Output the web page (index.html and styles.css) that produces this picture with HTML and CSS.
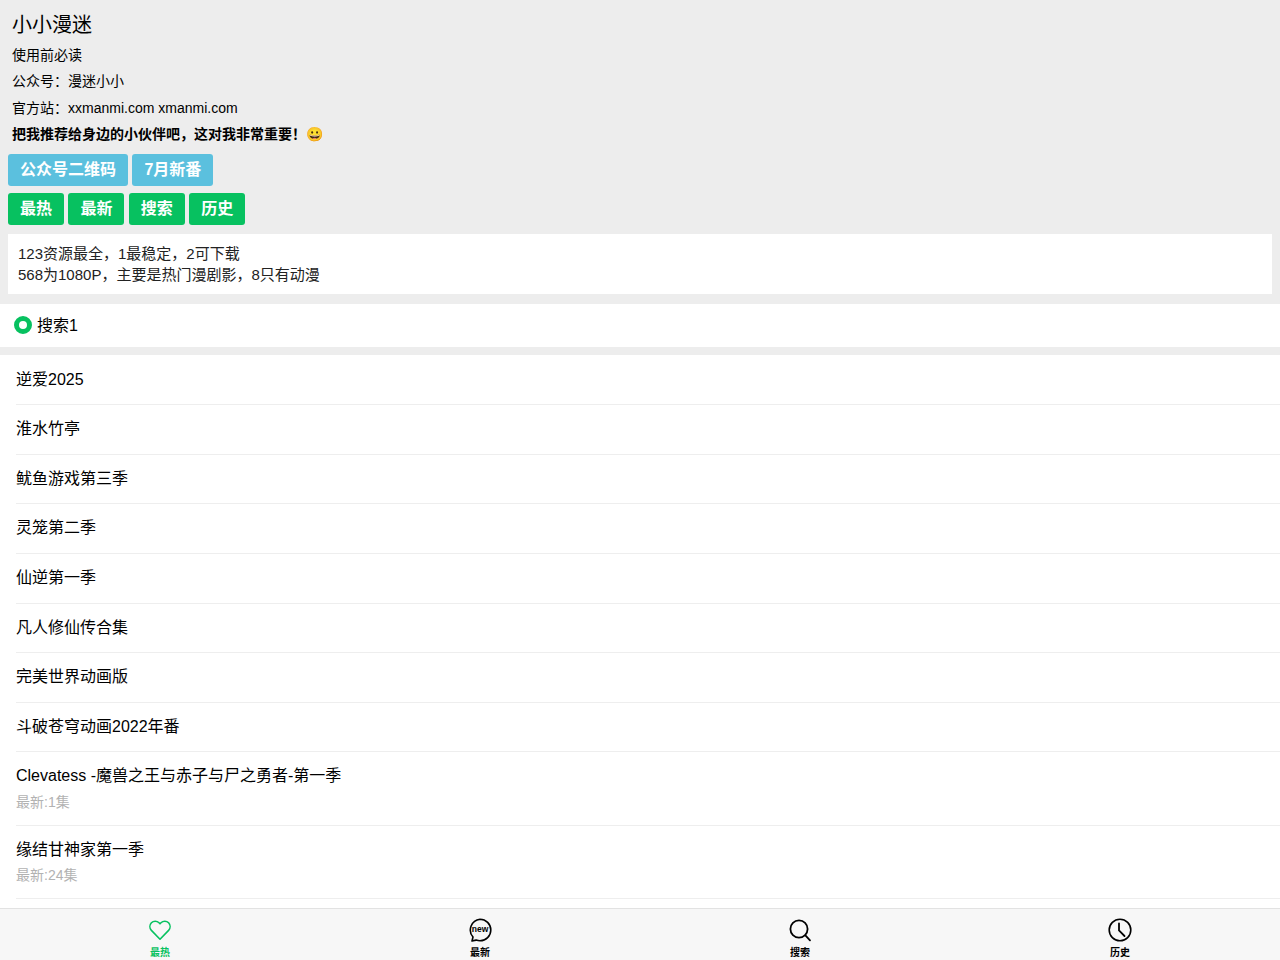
FILE: index.html
```html
<!DOCTYPE html>
<html lang="zh-CN">
<head>
    <meta charset="UTF-8">
    <meta name="viewport" content="width=device-width, initial-scale=1.0">
    <title>小小漫迷</title>
    <link rel="stylesheet" href="styles.css">
</head>
<body>
    <header class="intro">
        <h1 class="intro-title">小小漫迷</h1>
        <p class="intro-line">使用前必读</p>
        <p class="intro-line">公众号：漫迷小小</p>
        <p class="intro-line">官方站：xxmanmi.com xmanmi.com</p>
        <p class="intro-line intro-strong">把我推荐给身边的小伙伴吧，这对我非常重要！😀</p>
        <div class="btn-row">
            <a class="btn btn-info">公众号二维码</a>
            <a class="btn btn-info">7月新番</a>
        </div>
        <div class="btn-row">
            <a class="btn btn-green">最热</a>
            <a class="btn btn-green">最新</a>
            <a class="btn btn-green">搜索</a>
            <a class="btn btn-green">历史</a>
        </div>
        <div class="notice">
            123资源最全，1最稳定，2可下载<br>
            568为1080P，主要是热门漫剧影，8只有动漫
        </div>
    </header>

    <div class="source">
        <span class="radio"></span>
        <span class="source-name">搜索1</span>
    </div>

    <ul class="list">
        <li class="list-item">逆爱2025</li>
        <li class="list-item">淮水竹亭</li>
        <li class="list-item">鱿鱼游戏第三季</li>
        <li class="list-item">灵笼第二季</li>
        <li class="list-item">仙逆第一季</li>
        <li class="list-item">凡人修仙传合集</li>
        <li class="list-item">完美世界动画版</li>
        <li class="list-item">斗破苍穹动画2022年番</li>
        <li class="list-item">Clevatess -魔兽之王与赤子与尸之勇者-第一季<div class="list-sub">最新:1集</div></li>
        <li class="list-item">缘结甘神家第一季<div class="list-sub">最新:24集</div></li>
    </ul>

    <nav class="tabbar">
        <a class="tab tab-active">
            <svg class="tab-icon" viewBox="0 0 24 24" fill="none" stroke="currentColor" stroke-width="1.6" stroke-linejoin="round">
                <path d="M12 21.2 3.4 12.4a5.6 5.6 0 0 1 0-7.6 5.3 5.3 0 0 1 7.6 0l1 1 1-1a5.3 5.3 0 0 1 7.6 0 5.6 5.6 0 0 1 0 7.6z"/>
            </svg>
            <span class="tab-label">最热</span>
        </a>
        <a class="tab">
            <svg class="tab-icon" viewBox="0 0 24 24" fill="none" stroke="currentColor" stroke-width="1.6" stroke-linejoin="round">
                <path d="M12 1.2a10.8 10.8 0 0 1 0 21.6c-1.4 0-2.7-.3-3.9-.7L4 23l1-4A10.8 10.8 0 0 1 12 1.2z"/>
                <text class="new-text" x="12" y="14.2" text-anchor="middle">new</text>
            </svg>
            <span class="tab-label">最新</span>
        </a>
        <a class="tab">
            <svg class="tab-icon" viewBox="0 0 24 24" fill="none" stroke="currentColor" stroke-width="1.8" stroke-linecap="round">
                <circle cx="11" cy="11" r="8.6"/>
                <path d="M17.4 17.4 22 22.4"/>
            </svg>
            <span class="tab-label">搜索</span>
        </a>
        <a class="tab">
            <svg class="tab-icon" viewBox="0 0 24 24" fill="none" stroke="currentColor" stroke-width="1.6" stroke-linecap="round">
                <circle cx="12" cy="12" r="10.8"/>
                <path d="M11 5.5V12.5L16.5 18" stroke-width="1.8"/>
            </svg>
            <span class="tab-label">历史</span>
        </a>
    </nav>
</body>
</html>
```

FILE: styles.css
```css
* { box-sizing: border-box; }
html, body { margin: 0; padding: 0; }
body {
    height: 960px;
    overflow: hidden;
    background: #fff;
    color: #000;
    font-family: "Liberation Sans", "Noto Sans CJK SC", "Noto Color Emoji", sans-serif;
    font-size: 16px;
}

.intro { background: #ededed; padding: 9px 8px 10px; }
.intro-title { margin: 0 4px 4px; font-size: 20px; font-weight: 400; line-height: 33px; margin-bottom: 2px; }
.intro-line { margin: 0 4px 4px; font-size: 14px; line-height: 22.4px; }
.intro-strong { font-weight: 700; margin-bottom: 8px; }

.btn-row { display: flex; gap: 4.4px; margin-bottom: 7px; }
.btn {
    display: block;
    height: 32px;
    padding: 0 12px;
    border-radius: 3px;
    color: #fff;
    font-size: 16px;
    font-weight: 700;
    line-height: 32px;
}
.btn-info { background: #5bc0de; }
.btn-green { background: #07c160; }

.notice {
    margin-top: 9px;
    padding: 9px 10px;
    background: #fff;
    color: #222;
    font-size: 15px;
    line-height: 21px;
}

.source {
    display: flex;
    align-items: center;
    gap: 5px;
    height: 43px;
    padding-left: 14px;
    background: #fff;
}
.source-name { margin-top: -2px; }
.radio {
    width: 18px;
    height: 18px;
    border: 5.5px solid #07c160;
    border-radius: 50%;
    background: #fff;
}

.list { margin: 0; padding: 0; list-style: none; border-top: 8px solid #ededed; }
.list-item {
    margin-left: 16px;
    margin-bottom: -1px;
    padding: 12px 0;
    border-bottom: 1px solid #eee;
    font-size: 16px;
    line-height: 25.6px;
    min-height: 50.6px;
}
.list-sub { color: #b2b2b2; font-size: 14px; line-height: 24px; margin-top: 1px; margin-bottom: -1.4px; }

.tabbar {
    position: fixed;
    left: 0;
    right: 0;
    bottom: 0;
    display: flex;
    height: 52px;
    background: #f7f7f7;
    border-top: 1px solid #e2e2e2;
}
.tab {
    flex: 1;
    display: flex;
    flex-direction: column;
    align-items: center;
    padding-top: 9px;
    color: #000;
}
.tab-active { color: #07c160; }
.tab-icon { display: block; width: 24px; height: 24px; }
.new-text { fill: currentColor; stroke: none; font-size: 8.5px; font-weight: 700; }
.tab-label { margin-top: 4px; font-size: 10px; font-weight: 700; line-height: 14px; }
```
